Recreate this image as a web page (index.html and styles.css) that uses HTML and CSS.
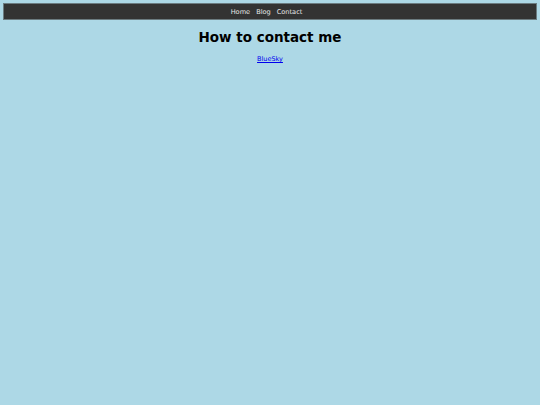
FILE: index.html
```
<!DOCTYPE html>
<html>
<head>
<meta charset="utf-8">
<link rel="stylesheet" href="styles.css">
</head>
<body>
<nav class="topnav">
  <a href="#">Home</a>
  <a href="#">Blog</a>
  <a href="#">Contact</a>
</nav>
<main class="content">
  <h1 class="title">How to contact me</h1>
  <p class="links"><a href="#">BlueSky</a></p>
</main>
</body>
</html>
```
FILE: styles.css
```
html, body {
  margin: 0;
  padding: 0;
}
body {
  background: #add8e6;
  padding: 3px;
  font-family: "DejaVu Sans", sans-serif;
}
.topnav {
  background: #333333;
  border: 1px solid #6b7b80;
  height: 15px;
  padding-right: 7px;
  display: flex;
  justify-content: center;
  align-items: center;
  gap: 6px;
}
.topnav a {
  color: #e8e8e8;
  text-decoration: none;
  font-size: 6.6px;
}
.content {
  text-align: center;
}
.title {
  font-size: 13.5px;
  line-height: 16px;
  margin: 9px 0 0;
}
.links {
  font-size: 6.5px;
  line-height: 8px;
  margin: 10px 0 0;
}
.links a {
  color: #0000ee;
}
```
